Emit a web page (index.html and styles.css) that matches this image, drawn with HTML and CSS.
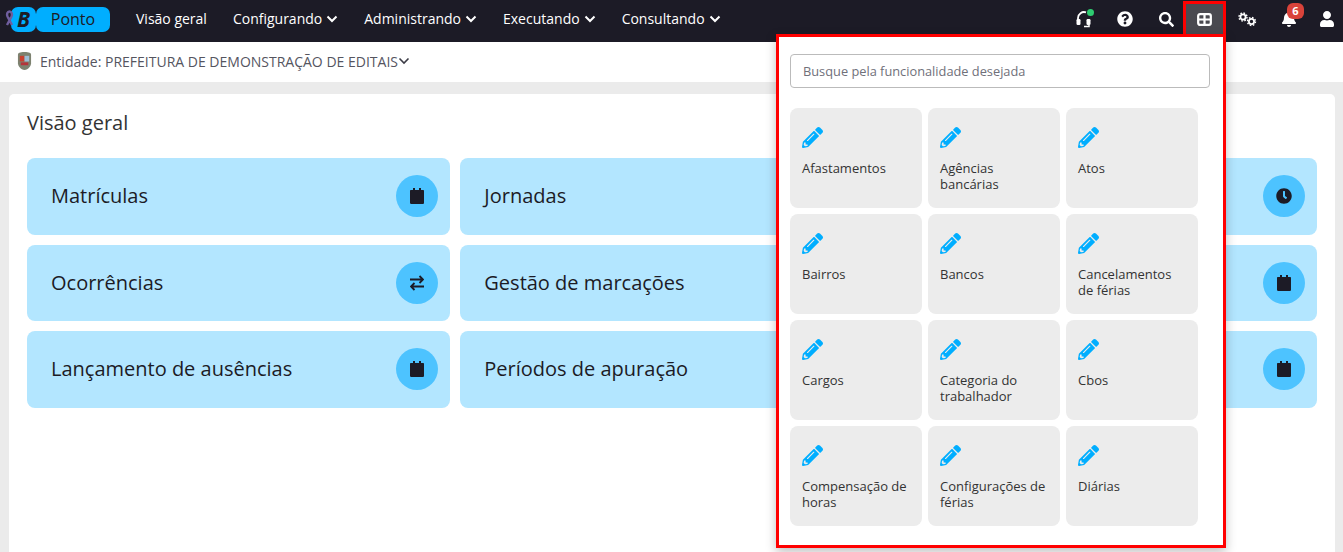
FILE: index.html
```html
<!DOCTYPE html>
<html lang="pt-BR">
<head>
    <meta charset="UTF-8">
    <title>Ponto - Visão geral</title>
    <link rel="stylesheet" href="styles.css">
</head>
<body>
    <header class="topbar">
        <div class="brand">
            <span class="brand-b">B</span>
            <span class="brand-name">Ponto</span>
            <svg class="ribbon" viewBox="0 0 12 16"><path d="M4 15 8.500 6.500C9.500 4.500 8.800 1.500 6.500 1.500S3.500 4.500 4.500 6.500L9 15" fill="none" stroke="#6f5e9e" stroke-width="2.400"/></svg>
        </div>
        <nav class="menu">
            <a>Visão geral</a>
            <a>Configurando <svg class="chev" viewBox="0 0 12 8"><path d="M1.500 1.500 6 6l4.500-4.500"/></svg></a>
            <a>Administrando <svg class="chev" viewBox="0 0 12 8"><path d="M1.500 1.500 6 6l4.500-4.500"/></svg></a>
            <a>Executando <svg class="chev" viewBox="0 0 12 8"><path d="M1.500 1.500 6 6l4.500-4.500"/></svg></a>
            <a>Consultando <svg class="chev" viewBox="0 0 12 8"><path d="M1.500 1.500 6 6l4.500-4.500"/></svg></a>
        </nav>
        <div class="tools">
            <span class="tool tool-headset">
                <svg viewBox="0 0 16 18" width="16" height="18"><path d="M2 10V8a6 6 0 0 1 8-5.600" fill="none" stroke="#fff" stroke-width="1.800"/><rect x="0.500" y="9" width="4" height="6" rx="1.200" fill="#fff"/><rect x="10.500" y="9" width="4" height="6" rx="1.200" fill="#fff"/><path d="M13 15v1.500H8" fill="none" stroke="#fff" stroke-width="1.500"/></svg>
                <i class="status-dot"></i>
            </span>
            <span class="tool tool-help">
                <svg viewBox="0 0 512 512" width="16" height="16"><path fill="#fff" d="M504 256c0 136.997-111.043 248-248 248S8 392.997 8 256C8 119.083 119.043 8 256 8s248 111.083 248 248zM262.655 90c-54.497 0-89.255 22.957-116.549 63.758-3.536 5.286-2.353 12.415 2.715 16.258l34.699 26.310c5.205 3.947 12.621 3.008 16.665-2.122 17.864-22.658 30.113-35.797 57.303-35.797 20.429 0 45.698 13.148 45.698 32.958 0 14.976-12.363 22.667-32.534 33.976C247.128 238.528 216 254.941 216 296v4c0 6.627 5.373 12 12 12h56c6.627 0 12-5.373 12-12v-1.333c0-28.462 83.186-29.647 83.186-106.667 0-58.002-60.165-102-116.531-102zM256 338c-25.365 0-46 20.635-46 46 0 25.364 20.635 46 46 46s46-20.636 46-46c0-25.365-20.635-46-46-46z"/></svg>
            </span>
            <span class="tool tool-search">
                <svg viewBox="0 0 512 512" width="15" height="15"><path fill="#fff" d="M505 442.700L405.300 343c-4.500-4.500-10.600-7-17-7H372c27.600-35.300 44-79.700 44-128C416 93.100 322.900 0 208 0S0 93.100 0 208s93.100 208 208 208c48.300 0 92.700-16.400 128-44v16.300c0 6.400 2.500 12.500 7 17l99.700 99.700c9.400 9.400 24.600 9.400 33.900 0l28.300-28.300c9.400-9.400 9.400-24.600.1-34zM208 336c-70.700 0-128-57.200-128-128 0-70.700 57.200-128 128-128 70.700 0 128 57.200 128 128 0 70.700-57.200 128-128 128z"/></svg>
            </span>
            <span class="tool tool-active">
                <svg viewBox="0 0 16 14" width="15" height="13"><rect x="1.200" y="1.200" width="13.600" height="11.600" rx="2" fill="none" stroke="#fff" stroke-width="2.400"/><path d="M1 7h14M8 1v12" stroke="#fff" stroke-width="2.400"/></svg>
            </span>
            <span class="tool tool-gears">
                <svg viewBox="0 0 20 16" width="20" height="16">
                    <circle cx="5" cy="6" r="2.600" class="gear"/><circle cx="5" cy="6" r="4" class="gear-teeth"/>
                    <circle cx="13.500" cy="10.500" r="2.600" class="gear"/><circle cx="13.500" cy="10.500" r="4" class="gear-teeth"/>
                </svg>
            </span>
            <span class="tool tool-bell">
                <svg viewBox="0 0 448 512" width="14" height="16"><path fill="#fff" d="M224 512c35.320 0 63.970-28.650 63.970-64H160.030c0 35.350 28.650 64 63.970 64zm215.390-149.710c-19.320-20.760-55.470-51.990-55.470-154.290 0-77.700-54.480-139.900-127.940-155.160V32c0-17.670-14.320-32-31.980-32s-31.980 14.330-31.980 32v20.840C118.560 68.100 64.080 130.300 64.080 208c0 102.300-36.150 133.530-55.470 154.290-6 6.450-8.660 14.160-8.610 21.710.11 16.400 12.980 32 32.100 32h383.800c19.120 0 32-15.600 32.100-32 .05-7.550-2.610-15.270-8.610-21.710z"/></svg>
                <b class="badge">6</b>
            </span>
            <span class="tool tool-user">
                <svg viewBox="0 0 448 512" width="14" height="16"><path fill="#fff" d="M224 256c70.700 0 128-57.300 128-128S294.700 0 224 0 96 57.300 96 128s57.300 128 128 128zm89.600 32h-16.700c-22.200 10.200-46.900 16-72.900 16s-50.600-5.800-72.900-16h-16.700C60.200 288 0 348.200 0 422.400V464c0 26.500 21.500 48 48 48h352c26.500 0 48-21.500 48-48v-41.600c0-74.200-60.200-134.400-134.400-134.400z"/></svg>
            </span>
        </div>
    </header>

    <div class="entity-bar">
        <svg class="crest" viewBox="0 0 16 19"><path d="M1 3c0-2 2-3 7-3s7 1 7 3v9c0 3-3 7-7 7s-7-4-7-7z" fill="#7d8270"/><rect x="3" y="4" width="5" height="6" fill="#c9402f"/><rect x="8" y="4" width="5" height="6" fill="#9dbdd6"/><rect x="4" y="11" width="8" height="3" fill="#b5333a"/></svg>
        <span class="entity-label">Entidade: PREFEITURA DE DEMONSTRAÇÃO DE EDITAIS</span>
        <svg class="chev chev-dark" viewBox="0 0 12 8"><path d="M1.500 1.500 6 6l4.500-4.500"/></svg>
    </div>

    <main class="page">
        <section class="panel">
            <h2>Visão geral</h2>
            <div class="cards">
                <div class="card"><span>Matrículas</span><i class="round"><svg viewBox="0 0 448 512"><use href="#cal"/></svg></i></div>
                <div class="card"><span>Jornadas</span></div>
                <div class="card"><i class="round"><svg viewBox="0 0 512 512" class="big"><path d="M256 8C119 8 8 119 8 256s111 248 248 248 248-111 248-248S393 8 256 8zm92.490 313l-20 25a16 16 0 0 1-22.490 2.500l-67-49.720a40 40 0 0 1-15-31.230V112a16 16 0 0 1 16-16h32a16 16 0 0 1 16 16v144l58 42.500a16 16 0 0 1 2.490 22.500z"/></svg></i></div>
                <div class="card"><span>Ocorrências</span><i class="round"><svg viewBox="0 0 14 16" class="swap"><path d="M0 4.500h13M9.500 1 13 4.500 9.500 8M14 11.500H1M4.500 8 1 11.500 4.500 15"/></svg></i></div>
                <div class="card"><span>Gestão de marcações</span></div>
                <div class="card"><i class="round"><svg viewBox="0 0 448 512"><use href="#cal"/></svg></i></div>
                <div class="card"><span>Lançamento de ausências</span><i class="round"><svg viewBox="0 0 448 512"><use href="#cal"/></svg></i></div>
                <div class="card"><span>Períodos de apuração</span></div>
                <div class="card"><i class="round"><svg viewBox="0 0 448 512"><use href="#cal"/></svg></i></div>
            </div>
        </section>
    </main>

    <div class="dropdown">
        <input class="search" type="text" placeholder="Busque pela funcionalidade desejada">
        <div class="tiles">
            <div class="tile"><svg viewBox="0 0 512 512"><use href="#pencil"/></svg><span>Afastamentos</span></div>
            <div class="tile"><svg viewBox="0 0 512 512"><use href="#pencil"/></svg><span>Agências bancárias</span></div>
            <div class="tile"><svg viewBox="0 0 512 512"><use href="#pencil"/></svg><span>Atos</span></div>
            <div class="tile"><svg viewBox="0 0 512 512"><use href="#pencil"/></svg><span>Bairros</span></div>
            <div class="tile"><svg viewBox="0 0 512 512"><use href="#pencil"/></svg><span>Bancos</span></div>
            <div class="tile"><svg viewBox="0 0 512 512"><use href="#pencil"/></svg><span>Cancelamentos de férias</span></div>
            <div class="tile"><svg viewBox="0 0 512 512"><use href="#pencil"/></svg><span>Cargos</span></div>
            <div class="tile"><svg viewBox="0 0 512 512"><use href="#pencil"/></svg><span>Categoria do trabalhador</span></div>
            <div class="tile"><svg viewBox="0 0 512 512"><use href="#pencil"/></svg><span>Cbos</span></div>
            <div class="tile"><svg viewBox="0 0 512 512"><use href="#pencil"/></svg><span>Compensação de horas</span></div>
            <div class="tile"><svg viewBox="0 0 512 512"><use href="#pencil"/></svg><span>Configurações de férias</span></div>
            <div class="tile"><svg viewBox="0 0 512 512"><use href="#pencil"/></svg><span>Diárias</span></div>
        </div>
    </div>

    <svg class="defs" width="0" height="0">
        <defs>
            <path id="cal" d="M96 10V64H30C13 64 0 77 0 94V482c0 17 13 30 30 30H418c17 0 30-13 30-30V94c0-17-13-30-30-30H352V10c0-6-4-10-10-10H298c-6 0-10 4-10 10V64H160V10c0-6-4-10-10-10H106c-6 0-10 4-10 10z"/>
            <path id="pencil" d="M497.900 142.100l-46.100 46.100c-4.700 4.700-12.300 4.700-17 0l-111-111c-4.700-4.700-4.700-12.300 0-17l46.100-46.100c18.700-18.700 49.100-18.700 67.900 0l60.100 60.100c18.800 18.700 18.800 49.100 0 67.900zM284.200 99.800L21.600 362.400.4 483.900c-2.900 16.400 11.400 30.600 27.800 27.800l121.500-21.300 262.600-262.600c4.700-4.700 4.700-12.300 0-17l-111-111c-4.800-4.700-12.400-4.700-17.100 0zM124.100 339.900c-5.500-5.500-5.500-14.300 0-19.800l154-154c5.500-5.500 14.300-5.500 19.800 0s5.500 14.300 0 19.800l-154 154c-5.500 5.500-14.300 5.500-19.800 0zM88 424h48v36.300l-64.500 11.300-31.100-31.100L51.700 376H88v48z"/>
        </defs>
    </svg>
</body>
</html>
```

FILE: styles.css
```css
/* Base */
html, body {
    height: 100%;
    margin: 0;
}
body {
    font-family: "Open Sans", "Liberation Sans", sans-serif;
    background-color: #ebebeb;
    color: #1c1b26;
    display: flex;
    flex-direction: column;
    overflow: hidden;
}

/* Barra superior */
.topbar {
    height: 42px;
    flex: none;
    display: flex;
    align-items: flex-start;
    box-sizing: border-box;
    background-color: #1c1b26;
    color: #fff;
}
.brand {
    display: flex;
    position: relative;
    margin-top: 7px;
    padding-left: 11px;
    width: 136px;
    box-sizing: border-box;
}
.ribbon {
    position: absolute;
    left: 3px;
    top: 3px;
    width: 12px;
    height: 16px;
}
.brand-b {
    width: 25px;
    height: 25px;
    background-color: #00aeff;
    border-radius: 7px;
    color: #1c1b26;
    font: italic 700 21px/25px "Open Sans", sans-serif;
    text-align: center;
}
.brand-name {
    width: 74px;
    height: 25px;
    background-color: #00aeff;
    border-radius: 7px;
    color: #1c1b26;
    font-size: 16px;
    line-height: 25px;
    text-align: center;
}
.menu {
    display: flex;
    gap: 26px;
    margin-top: 9px;
    font-size: 14px;
    font-weight: 500;
}
.menu a {
    display: flex;
    align-items: center;
    gap: 4px;
    white-space: nowrap;
}
.chev {
    width: 12px;
    height: 8px;
    fill: none;
    stroke: #fff;
    stroke-width: 2;
}
.chev-dark {
    stroke: #3c3c46;
    stroke-width: 1.600;
}
.tools {
    display: flex;
    margin-left: auto;
    padding-top: 1px;
}
.tool {
    position: relative;
    height: 36px;
    display: flex;
    align-items: center;
    justify-content: center;
}
.tool-headset { width: 40px; }
.tool-help { width: 41px; margin-right: 4px; }
.tool-search { width: 34px; }
.tool-active {
    width: 43px;
    box-sizing: border-box;
    background-color: #4a4a50;
    outline: 3px solid #f00;
    outline-offset: -3px;
}
.tool-gears { width: 44px; }
.tool-bell { width: 37px; }
.tool-user { width: 32px; margin-left: 4px; }
.gear {
    fill: none;
    stroke: #fff;
    stroke-width: 1.800;
}
.gear-teeth {
    fill: none;
    stroke: #fff;
    stroke-width: 1.400;
    stroke-dasharray: 1.600 1.540;
}
.status-dot {
    position: absolute;
    top: 8px;
    left: 23px;
    width: 7px;
    height: 7px;
    border-radius: 50%;
    background-color: #2ecc71;
}
.badge {
    position: absolute;
    top: 2px;
    left: 17px;
    width: 17px;
    height: 16px;
    border-radius: 6px;
    background-color: #d9433a;
    font-size: 11px;
    line-height: 16px;
    text-align: center;
}

/* Entidade */
.entity-bar {
    height: 40px;
    flex: none;
    display: flex;
    align-items: center;
    box-sizing: border-box;
    padding: 0 0 2px 17px;
    background-color: #fff;
    color: #55555f;
    font-size: 14px;
}
.crest {
    width: 15px;
    height: 18px;
    margin-right: 8px;
}

/* Pagina */
.page {
    flex: 1;
    padding: 12px 8px 0 9px;
}
.panel {
    height: 100%;
    background-color: #fff;
    border-radius: 5px 5px 0 0;
    padding: 14px 18px 0;
    box-sizing: border-box;
}
.panel h2 {
    margin: 0 0 20px;
    font-size: 20px;
    font-weight: 400;
    line-height: 30px;
    color: #333;
}
.cards {
    display: grid;
    grid-template-columns: repeat(3, 1fr);
    grid-auto-rows: 76.500px;
    gap: 10px;
}
.card {
    display: flex;
    align-items: center;
    justify-content: space-between;
    padding: 0 12px 0 24px;
    background-color: #b3e6ff;
    border-radius: 8px;
    font-size: 20px;
}
.card span {
    margin-top: -1px;
}
.card .round:only-child {
    margin-left: auto;
}
.round {
    width: 42px;
    height: 42px;
    border-radius: 50%;
    background-color: #4dc3ff;
    display: flex;
    align-items: center;
    justify-content: center;
}
.round svg {
    width: 14px;
    height: 16px;
    fill: #1c1b26;
}
.round svg.big {
    width: 16px;
    height: 16px;
}
.round svg.swap {
    width: 14px;
    height: 16px;
    fill: none;
    stroke: #1c1b26;
    stroke-width: 1.800;
}

/* Menu aberto */
.dropdown {
    position: absolute;
    left: 776px;
    top: 34px;
    width: 450px;
    height: 514px;
    box-sizing: border-box;
    border: 3px solid #f00;
    padding: 17px 13px 0 11px;
    background-color: #fff;
    box-shadow: 0 4px 10px rgba(0, 0, 0, 0.25);
}
.search {
    display: block;
    width: 100%;
    height: 34px;
    box-sizing: border-box;
    border: 1px solid #bbb;
    border-radius: 4px;
    padding: 0 12px;
    font: 12.800px "Open Sans", sans-serif;
}
.search::placeholder {
    color: #70707a;
    opacity: 1;
}
.tiles {
    display: grid;
    grid-template-columns: repeat(3, 132px);
    grid-auto-rows: 100px;
    gap: 6px;
    margin-top: 20px;
}
.tile {
    background-color: #ececec;
    border-radius: 8px;
    padding: 19px 12px 0;
    box-sizing: border-box;
    font-size: 13px;
    line-height: 16px;
    color: #333;
}
.tile svg {
    display: block;
    width: 21px;
    height: 21px;
    fill: #00aeff;
    margin-bottom: 12px;
}
.defs {
    position: absolute;
}
```
